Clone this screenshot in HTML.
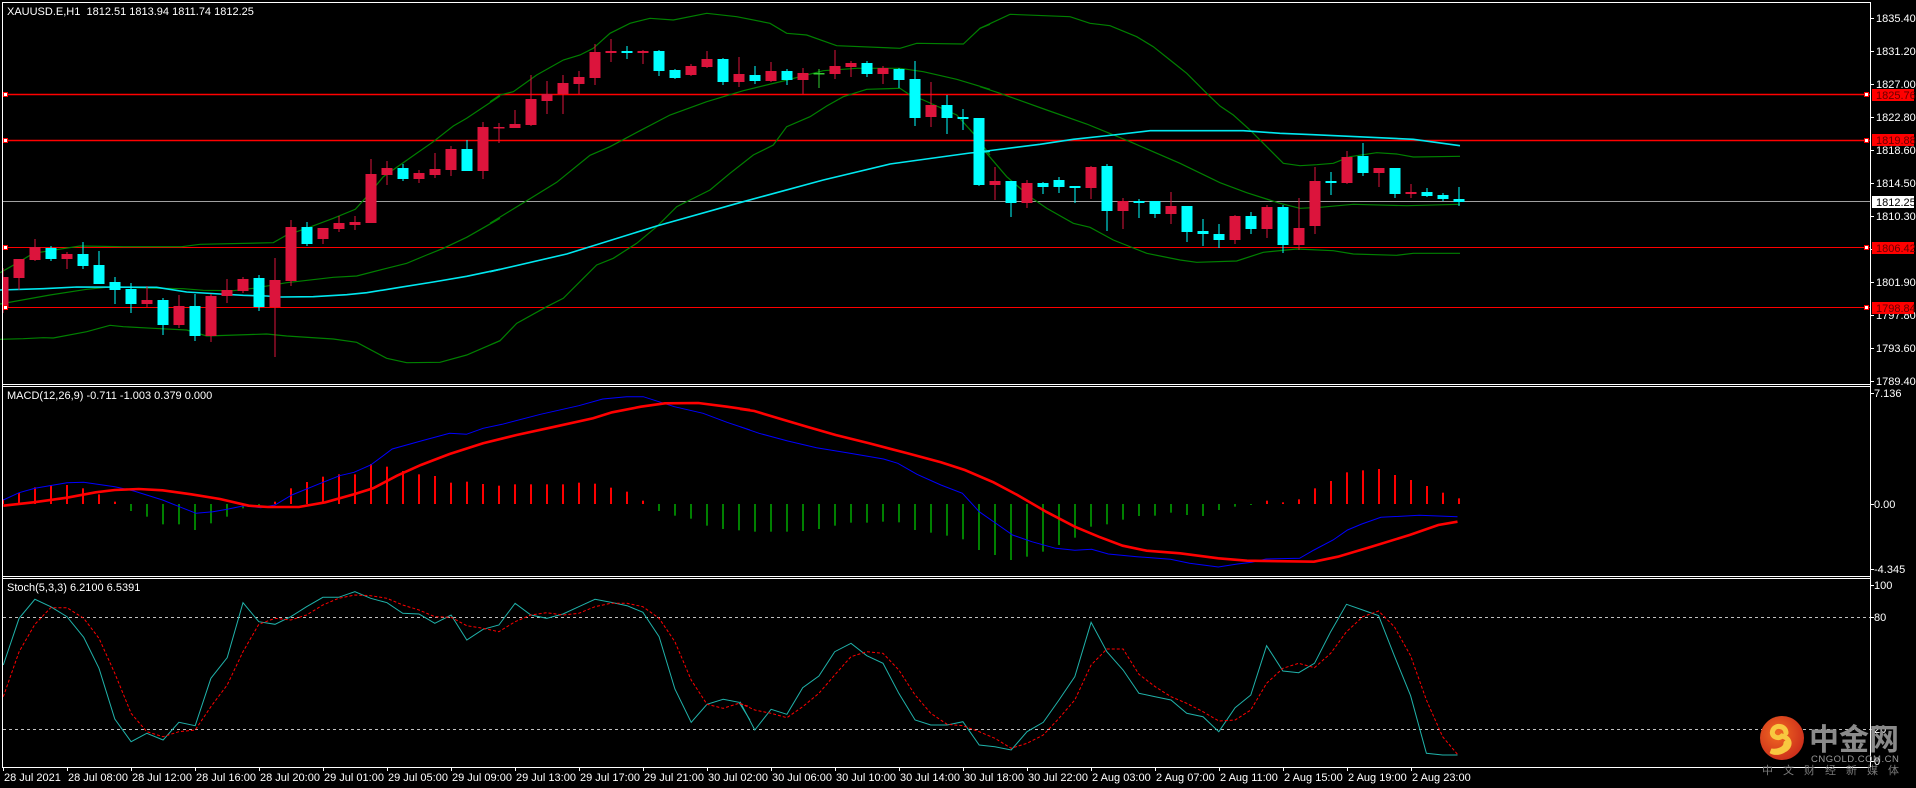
<!DOCTYPE html>
<html><head><meta charset="utf-8"><style>
html,body{margin:0;padding:0;background:#000;width:1916px;height:788px;overflow:hidden}
svg{display:block}
text{font-family:"Liberation Sans","Noto Sans CJK SC",sans-serif;font-size:11px;fill:#fff}
</style></head><body>
<svg id="s" width="1916" height="788" viewBox="0 0 1916 788" xmlns="http://www.w3.org/2000/svg">
<rect width="1916" height="788" fill="#000"/>
<g id="g"></g>
<!-- frames -->
<g stroke="#fff" stroke-width="1" fill="none" shape-rendering="crispEdges">
<line x1="2" y1="2.5" x2="1870" y2="2.5"/>
<line x1="2.5" y1="2" x2="2.5" y2="767"/>
<line x1="1870.5" y1="2" x2="1870.5" y2="767"/>
<line x1="2" y1="384.5" x2="1870" y2="384.5"/>
<line x1="2" y1="386.5" x2="1870" y2="386.5"/>
<line x1="2" y1="576.5" x2="1870" y2="576.5"/>
<line x1="2" y1="578.5" x2="1870" y2="578.5"/>
<line x1="2" y1="767.5" x2="1870" y2="767.5"/>
</g>
<g id="ticks" stroke="#fff" shape-rendering="crispEdges"></g>
<!-- header texts -->
<text x="7" y="15">XAUUSD.E,H1&#160;&#160;1812.51 1813.94 1811.74 1812.25</text>
<text x="7" y="399">MACD(12,26,9) -0.711 -1.003 0.379 0.000</text>
<text x="7" y="591">Stoch(5,3,3) 6.2100 6.5391</text>
<!-- price axis -->
<g>
<text x="1876" y="22">1835.40</text>
<text x="1876" y="55">1831.20</text>
<text x="1876" y="88">1827.00</text>
<text x="1876" y="121">1822.80</text>
<text x="1876" y="154">1818.60</text>
<text x="1876" y="187">1814.50</text>
<text x="1876" y="220">1810.30</text>
<text x="1876" y="286">1801.90</text>
<text x="1876" y="319">1797.80</text>
<text x="1876" y="352">1793.60</text>
<text x="1876" y="385">1789.40</text>
<rect x="1872" y="89" width="42" height="12" fill="#ff0000"/><text x="1876" y="99" style="fill:#600">1825.76</text>
<rect x="1872" y="134" width="42" height="12" fill="#ff0000"/><text x="1876" y="144" style="fill:#600">1819.88</text>
<rect x="1872" y="196" width="42" height="12" fill="#fff"/><text x="1876" y="206" style="fill:#000">1812.25</text>
<rect x="1872" y="242" width="42" height="12" fill="#ff0000"/><text x="1876" y="252" style="fill:#600">1806.42</text>
<rect x="1872" y="302" width="42" height="12" fill="#ff0000"/><text x="1876" y="312" style="fill:#600">1798.84</text>
<text x="1874" y="397">7.136</text>
<text x="1874" y="508">0.00</text>
<text x="1874" y="573">-4.345</text>
<text x="1874" y="589">100</text>
<text x="1874" y="621">80</text>
<text x="1874" y="733">20</text>
<text x="1874" y="765">0</text>
</g>
<!-- time axis -->
<g id="time"></g>
<!-- logo -->
<g>
<defs><radialGradient id="lg" cx="0.4" cy="0.4" r="0.7"><stop offset="0" stop-color="#f26a22"/><stop offset="1" stop-color="#c8281a"/></radialGradient></defs>
<circle cx="1782" cy="738" r="22" fill="url(#lg)"/>
<path d="M1786 733 C1786 726 1776 724 1773 730 C1770 736 1778 740 1782 736 C1790 738 1792 746 1784 750 C1780 753 1774 753 1771 751 C1778 752 1786 749 1786 743" fill="none" stroke="#f8c840" stroke-width="5" stroke-linecap="round"/>
<text x="1809" y="750" style="font-size:30px;fill:#8a8a8a;font-weight:bold;font-family:'Noto Sans CJK SC',sans-serif">中金网</text>
<text x="1811" y="762" style="font-size:9.5px;fill:#9a9a9a;letter-spacing:0.5px">CNGOLD.COM.CN</text>
<text x="1762" y="774" style="font-size:11px;fill:#7a7a7a;letter-spacing:10px;font-family:'Noto Sans CJK SC',sans-serif">中文财经新媒体</text>
</g>
</svg>
<script>
var NS='http://www.w3.org/2000/svg',h='';
function pl(a,ox,sx,oy,sy,st){var p=[];for(var i=0;i<a.length;i+=2)p.push((ox+a[i]*sx).toFixed(1)+','+(oy+a[i+1]*sy).toFixed(1));return '<polyline points="'+p.join(' ')+'" fill="none" '+st+'/>';}
function seg(parts,st){return parts.map(function(q){return pl(q[0],q[1],q[2],q[3],q[4],st)}).join('');}
var k=1/3,kx=750/1568;
// horizontal lines
h+='<line x1="3" y1="94.5" x2="1870" y2="94.5" stroke="#ff0000" stroke-width="1.5"/>';
h+='<line x1="3" y1="140.5" x2="1870" y2="140.5" stroke="#ff0000" stroke-width="1.5"/>';
h+='<line x1="3" y1="201.5" x2="1870" y2="201.5" stroke="#a0a0a0" stroke-width="1"/>';
h+='<line x1="3" y1="247.5" x2="1870" y2="247.5" stroke="#ff0000" stroke-width="1"/>';
h+='<line x1="3" y1="307.5" x2="1870" y2="307.5" stroke="#ff0000" stroke-width="1"/>';
// bollinger
var bst='stroke="#008000" stroke-width="1.2"';
h+=seg([[[0,818,50,790,100,760,240,738,370,740,545,740,600,733,820,728,860,705,920,685,1000,655,1066,628,1100,590,1150,530,1250,460,1300,425,1360,378,1400,355,1500,288],0,k,0,k],
[[0,305,30,285,70,275,140,225,220,180,270,165,310,145,360,100,420,70,480,55,550,60,650,40,740,50,840,70,890,100,950,105,1040,137,1230,145,1280,130,1420,132,1470,85,1500,73],490,k,0,k],
[[0,85,90,43,270,50,330,70,390,77,470,110,520,140,570,180,620,220,680,280,720,318,760,345,810,390,860,440,910,490,960,497,1010,494,1060,490,1110,470,1190,458,1250,462,1300,471,1440,469],980,k,0,k]],bst);
h+=seg([[[0,912,150,885,260,868,340,860,440,864,550,866,610,871,700,872,760,865,860,848,1000,832,1070,828,1160,805,1220,790,1280,765,1330,745,1400,712,1500,655],0,k,0,k],
[[0,670,110,602,200,547,300,466,360,440,450,392,540,345,650,305,760,272,880,243,1000,212,1100,205,1230,205,1300,215,1400,238,1500,268],490,k,0,k],
[[0,260,60,280,200,330,320,372,450,425,600,490,720,548,800,578,900,610,960,625,1020,622,1120,613,1280,617,1440,613],980,k,0,k]],bst);
h+=seg([[[0,1018,70,1016,130,1013,160,1014,260,995,330,976,370,980,460,985,560,990,620,1008,800,1002,860,1008,1000,1017,1070,1027,1160,1075,1220,1088,1320,1087,1400,1065,1500,1022],0,k,0,k],
[[0,1035,30,1022,80,970,170,920,220,895,280,835,320,795,370,775,440,730,500,680,560,620,600,600,660,570,720,520,790,465,850,435,890,380,960,350,1010,318,1060,290,1130,268,1230,265,1260,285,1300,300,1400,345,1450,400,1500,465],490,k,0,k],
[[0,440,20,460,80,530,150,590,200,625,280,670,330,682,400,720,500,760,600,780,650,787,770,783,850,757,950,747,1060,752,1120,762,1250,766,1300,760,1440,760],980,k,0,k]],bst);
// MA
var mst='stroke="#00e8f0" stroke-width="1.6"';
h+=seg([[[0,870,130,866,230,861,470,862,560,876,660,882,730,886,800,888,840,891,940,890,1040,884,1100,878,1200,862,1300,846,1400,829,1500,808],0,k,0,k],
[[0,815,230,762,500,678,760,605,1000,540,1200,492,1440,459,1500,454],490,k,0,k],
[[0,454,20,453,180,433,280,418,400,405,510,392,790,392,900,400,1000,404,1300,418,1440,437],980,k,0,k]],mst);
// candles
var C=[[277,308,268,313,'r'],[259,278,259,290,'r'],[247,260,239,261,'r'],[248,259,246,261,'c'],[254,259,252,269,'r'],[254,266,242,269,'c'],[265,284,251,284,'c'],[282,290,277,304,'c'],[289,304,283,313,'c'],[300,304,286,307,'r'],
[300,325,298,335,'c'],[306,325,295,328,'r'],[306,336,294,341,'c'],[296,336,294,342,'r'],[290,296,279,303,'r'],[279,291,277,293,'r'],[278,307,275,311,'c'],[280,307,258,357,'r'],[227,281,220,286,'r'],[227,244,222,246,'c'],
[228,239,228,244,'r'],[223,229,216,232,'r'],[222,225,216,230,'r'],[174,223,159,223,'r'],[168,175,161,185,'r'],[168,179,164,181,'c'],[173,179,170,183,'r'],[169,175,153,178,'r'],[149,170,146,176,'r'],[149,171,140,171,'c'],
[127,171,122,179,'r'],[127,128,123,143,'r'],[124,128,110,128,'r'],[99,125,75,126,'r'],[94,101,81,114,'r'],[83,94,75,114,'r'],[77,84,71,94,'r'],[52,78,44,85,'r'],[51,53,39,62,'r'],[51,53,46,59,'c'],
[51,53,50,64,'r'],[51,71,50,76,'c'],[70,78,69,79,'c'],[66,75,64,76,'r'],[59,67,51,68,'r'],[59,82,58,85,'c'],[74,82,57,87,'r'],[75,81,66,84,'c'],[71,81,62,82,'r'],[71,80,69,85,'c'],
[73,80,68,94,'r'],[73,74,69,88,'g'],[66,74,50,79,'r'],[63,67,61,77,'r'],[63,74,61,77,'c'],[68,74,66,84,'r'],[69,80,68,88,'c'],[79,118,61,126,'c'],[105,117,82,127,'r'],[105,118,95,134,'c'],
[117,119,109,130,'c'],[118,185,118,186,'c'],[181,185,167,200,'r'],[181,203,181,217,'c'],[183,203,180,208,'r'],[183,187,182,194,'c'],[180,187,177,193,'c'],[186,188,186,203,'c'],[167,188,166,199,'r'],[166,211,164,231,'c'],
[201,211,198,229,'r'],[201,203,199,218,'c'],[201,214,201,218,'c'],[206,214,192,224,'r'],[206,232,206,242,'c'],[231,234,219,246,'c'],[234,240,224,248,'c'],[216,240,215,244,'r'],[216,229,212,234,'c'],[207,229,205,238,'r'],
[207,245,205,253,'c'],[228,245,198,250,'r'],[181,226,167,234,'r'],[181,183,172,195,'c'],[157,183,151,184,'r'],[156,173,143,176,'c'],[168,173,168,187,'r'],[168,194,168,198,'c'],[192,194,184,198,'r'],[192,196,188,197,'c'],
[195,199,193,201,'c'],[199,202,187,206,'c']];
var col={r:'#dc143c',c:'#00ffff',g:'#32cd32'};
for(var i=0;i<C.length;i++){var c=C[i],x=3+16*i,f=col[c[4]];var x0=Math.max(3,x-5.5),w=x+5.5-x0;
h+='<rect x="'+(x-0.5)+'" y="'+c[2]+'" width="1" height="'+Math.max(1,c[3]-c[2])+'" fill="'+f+'"/>';
h+='<rect x="'+x0+'" y="'+c[0]+'" width="'+w+'" height="'+Math.max(1.5,c[1]-c[0])+'" fill="'+f+'"/>';}
// handles
[94,140,247,307].forEach(function(y){h+='<rect x="3.5" y="'+(y-1.5)+'" width="4" height="4" fill="#fff" stroke="#ff0000" stroke-width="1"/><rect x="1864.5" y="'+(y-1.5)+'" width="4" height="4" fill="#fff" stroke="#ff0000" stroke-width="1"/>';});
// MACD histogram
var H=[342,323,307,300,300,310,328,350,378,395,418,418,435,415,395,370,368,350,310,291,275,268,268,237,245,258,268,273,293,290,297,302,298,298,298,298,293,296,308,320,347,378,392,401,422,432,
436,440,440,440,438,432,422,413,413,410,412,435,443,452,463,495,510,525,515,500,480,458,425,418,404,393,392,383,390,393,375,365,358,347,352,343,310,288,262,256,252,270,285,303,323,340];
for(var i=0;i<H.length;i++){var x=3+16*i,y=385+H[i]/3,z=504;var up=y<z;h+='<rect x="'+(x-1)+'" y="'+Math.min(y,z)+'" width="2" height="'+Math.max(1,Math.abs(y-z))+'" fill="'+(up?'#ff0000':'#008000')+'"/>';}
// MACD lines
h+=seg([[[7,345,40,323,73,310,140,293,175,292,240,305,280,318,340,345,380,368,410,385,445,380,475,373,510,362,545,368,575,360,610,330,670,295,710,272,740,262,775,240,820,192,880,168,940,145,975,148,1010,130,1050,118,1130,88,1210,62,1260,42,1310,35,1345,35,1410,65,1470,85,1520,112,1568,135],0,kx,385,k],
[[0,125,40,145,100,168,160,188,230,205,300,222,330,235,370,268,420,300,465,325,500,380,540,420,570,450,610,470,660,490,700,496,735,493,770,507,830,515,900,523,940,535,1000,546,1040,537,1070,532,1100,522,1170,520,1200,495,1240,465,1270,435,1300,417,1340,397,1420,391,1500,395],740,kx,385,k]],'stroke="#0000ff" stroke-width="1"');
h+=seg([[[7,362,70,352,140,338,200,322,240,315,290,312,340,316,400,328,460,342,520,362,560,366,625,366,680,352,740,328,780,310,830,272,880,240,940,207,1010,175,1080,150,1160,125,1240,100,1280,82,1340,65,1390,55,1460,54,1520,65,1568,75],0,kx,385,k],
[[0,72,30,78,80,100,140,125,200,150,270,175,350,205,420,232,470,255,530,292,580,330,640,380,700,425,750,455,800,482,850,497,920,505,1000,520,1060,527,1200,530,1250,515,1320,485,1400,450,1460,420,1500,410],740,kx,385,k]],'stroke="#ff0000" stroke-width="2.6"');
// stoch levels
h+='<line x1="3" y1="617.5" x2="1870" y2="617.5" stroke="#c0c0c0" stroke-dasharray="3,3"/>';
h+='<line x1="3" y1="729.5" x2="1870" y2="729.5" stroke="#c0c0c0" stroke-dasharray="3,3"/>';
h+=seg([[[7,840,40,700,73,643,106,665,140,695,175,757,207,850,240,1002,274,1070,307,1045,341,1065,374,1012,408,1022,441,880,475,818,508,653,541,710,575,718,608,695,641,665,675,637,708,637,742,620,775,640,809,653,842,685,876,687,909,715,943,690,976,765,1010,733,1043,720,1077,655,1110,690,1143,700,1177,687,1210,665,1244,643,1277,652,1311,662,1344,682,1378,755,1411,912,1445,1012,1478,958,1512,943,1545,952,1568,1005],0,kx,385,k],
[[0,950,31,1035,65,973,98,988,131,908,165,873,198,800,232,775,265,812,299,835,332,925,366,1005,399,1020,433,1020,466,1010,500,1080,533,1085,567,1095,600,1040,634,1012,667,945,700,875,734,712,767,800,801,855,834,925,868,935,901,945,934,985,968,995,1001,1040,1035,968,1068,930,1101,782,1135,858,1168,863,1201,835,1235,740,1268,658,1302,675,1335,692,1368,812,1402,932,1435,1105,1469,1110,1500,1110],740,kx,385,k]],'stroke="#20b2aa" stroke-width="1"');
h+=seg([[[7,935,40,800,73,718,106,668,140,668,175,700,207,760,240,865,274,985,307,1040,341,1055,374,1040,408,1035,441,965,475,900,508,800,541,718,575,700,608,705,641,690,675,660,708,640,742,630,775,632,809,640,842,660,876,675,909,695,943,697,976,722,1010,730,1043,740,1077,710,1110,690,1143,683,1177,690,1210,685,1244,665,1277,655,1311,655,1344,665,1378,700,1411,770,1445,885,1478,958,1512,970,1545,955,1568,965],0,kx,385,k],
[[0,955,31,975,65,985,98,998,131,965,165,925,198,870,232,815,265,800,299,805,332,855,366,930,399,985,433,1018,466,1022,500,1040,533,1060,567,1090,600,1075,634,1050,667,1000,700,945,734,840,767,792,801,792,834,868,868,905,901,935,934,955,968,980,1001,1008,1035,1005,1068,975,1101,895,1135,850,1168,835,1201,848,1235,805,1268,740,1302,695,1335,678,1368,725,1402,812,1435,945,1469,1055,1500,1108],740,kx,385,k]],'stroke="#ff0000" stroke-width="1" stroke-dasharray="3,2"');
document.getElementById('g').innerHTML=h;
// ticks
var t='';[18,51,84,117,150,183,216,249,282,315,348,381,393,504,569,585,617,729,761].forEach(function(y){t+='<line x1="1870" y1="'+(y+0.5)+'" x2="1874" y2="'+(y+0.5)+'"/>';});
var L=['28 Jul 2021','28 Jul 08:00','28 Jul 12:00','28 Jul 16:00','28 Jul 20:00','29 Jul 01:00','29 Jul 05:00','29 Jul 09:00','29 Jul 13:00','29 Jul 17:00','29 Jul 21:00','30 Jul 02:00','30 Jul 06:00','30 Jul 10:00','30 Jul 14:00','30 Jul 18:00','30 Jul 22:00','2 Aug 03:00','2 Aug 07:00','2 Aug 11:00','2 Aug 15:00','2 Aug 19:00','2 Aug 23:00'];
var tt='';for(var i=0;i<L.length;i++){var x=3+64*i;t+='<line x1="'+(x+0.5)+'" y1="767" x2="'+(x+0.5)+'" y2="771"/>';
for(var j=1;j<4&&i<22;j++)t+='';
tt+='<text x="'+(x+1)+'" y="781">'+L[i]+'</text>';}
document.getElementById('ticks').innerHTML=t;
document.getElementById('time').innerHTML=tt;
</script>
</body></html>
